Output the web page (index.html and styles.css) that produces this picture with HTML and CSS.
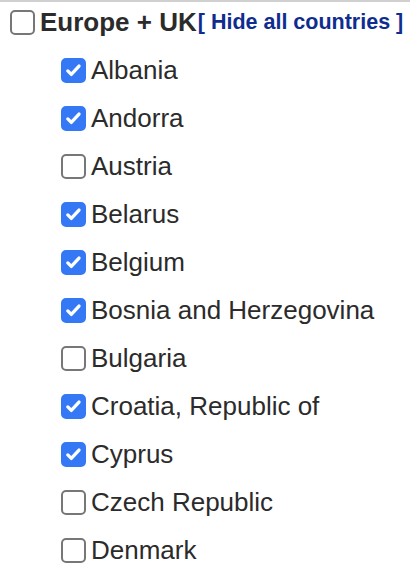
FILE: index.html
```html
<!DOCTYPE html>
<html>
<head>
<meta charset="utf-8">
<link rel="stylesheet" href="styles.css">
</head>
<body>
<div class="region">
  <div class="region-head">
    <span class="box"></span>
    <span class="region-name">Europe + UK</span>
    <a class="toggle" href="#">[ Hide all countries ]</a>
  </div>
  <ul class="countries">
    <li class="row"><span class="box on"><svg viewBox="0 0 24 24"><path d="M5.5 12.5l4 4 8.8-9.6"/></svg></span><span class="name">Albania</span></li>
    <li class="row"><span class="box on"><svg viewBox="0 0 24 24"><path d="M5.5 12.5l4 4 8.8-9.6"/></svg></span><span class="name">Andorra</span></li>
    <li class="row"><span class="box"></span><span class="name">Austria</span></li>
    <li class="row"><span class="box on"><svg viewBox="0 0 24 24"><path d="M5.5 12.5l4 4 8.8-9.6"/></svg></span><span class="name">Belarus</span></li>
    <li class="row"><span class="box on"><svg viewBox="0 0 24 24"><path d="M5.5 12.5l4 4 8.8-9.6"/></svg></span><span class="name">Belgium</span></li>
    <li class="row"><span class="box on"><svg viewBox="0 0 24 24"><path d="M5.5 12.5l4 4 8.8-9.6"/></svg></span><span class="name">Bosnia and Herzegovina</span></li>
    <li class="row"><span class="box"></span><span class="name">Bulgaria</span></li>
    <li class="row"><span class="box on"><svg viewBox="0 0 24 24"><path d="M5.5 12.5l4 4 8.8-9.6"/></svg></span><span class="name">Croatia, Republic of</span></li>
    <li class="row"><span class="box on"><svg viewBox="0 0 24 24"><path d="M5.5 12.5l4 4 8.8-9.6"/></svg></span><span class="name">Cyprus</span></li>
    <li class="row"><span class="box"></span><span class="name">Czech Republic</span></li>
    <li class="row"><span class="box"></span><span class="name">Denmark</span></li>
  </ul>
</div>
</body>
</html>
```

FILE: styles.css
```css
html, body {
  margin: 0;
  padding: 0;
  background: #fff;
}
body {
  font-family: "Liberation Sans", Arial, sans-serif;
  color: #2b2b2b;
  border-top: 2px solid #d0d0d0;
}
.region {
  padding: 8px 0 0 10px;
}
.region-head {
  display: flex;
  align-items: center;
  height: 25px;
}
.region-name {
  font-weight: bold;
  font-size: 26px;
  margin-left: 5px;
  color: #2b2b2b;
}
.toggle {
  font-weight: bold;
  font-size: 21.5px;
  color: #0e2d8f;
  text-decoration: none;
  margin-left: 1px;
}
.box {
  box-sizing: border-box;
  width: 25px;
  height: 25px;
  border: 2px solid #777;
  border-radius: 5px;
  background: #fff;
  flex: none;
  display: flex;
  align-items: center;
  justify-content: center;
}
.box.on {
  background: #3478f6;
  border-color: #3478f6;
}
.box svg {
  width: 23px;
  height: 23px;
  fill: none;
  stroke: #fff;
  stroke-width: 3.8;
  stroke-linecap: round;
  stroke-linejoin: round;
}
.countries {
  list-style: none;
  margin: 0;
  padding: 0 0 0 51px;
}
.row {
  display: flex;
  align-items: center;
  height: 48px;
}
.countries .row:first-child {
  margin-top: 11px;
}
.name {
  font-size: 26px;
  margin-left: 5px;
  color: #2b2b2b;
}
```
